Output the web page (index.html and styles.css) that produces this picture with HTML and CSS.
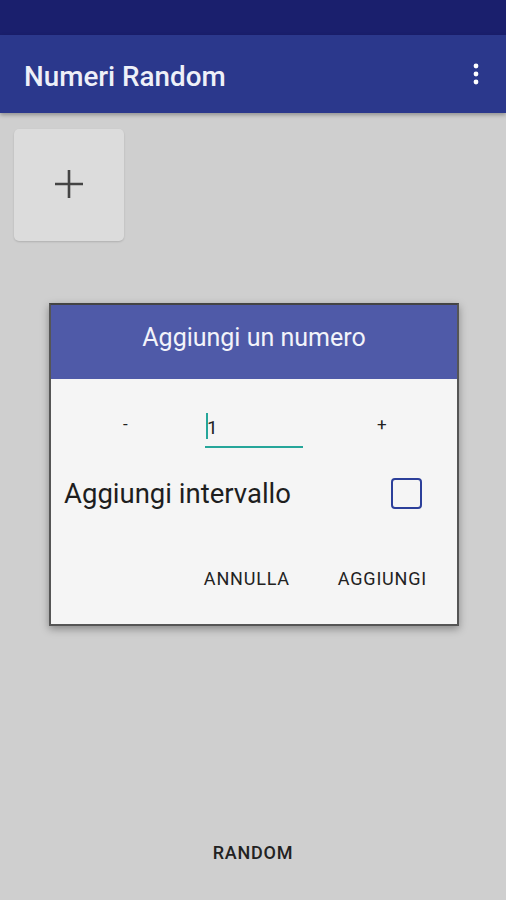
FILE: index.html
```html
<!DOCTYPE html>
<html>
<head>
<meta charset="utf-8">
<link rel="stylesheet" href="styles.css">
</head>
<body>
<div class="screen">
  <div class="statusbar"></div>
  <header class="appbar">
    <span class="title">Numeri Random</span>
    <svg class="kebab" width="8" height="24" viewBox="0 0 8 24"><circle cx="4" cy="4" r="2.4" fill="#fff"/><circle cx="4" cy="12" r="2.4" fill="#fff"/><circle cx="4" cy="20" r="2.4" fill="#fff"/></svg>
  </header>
  <main class="content">
    <div class="addcard">
      <svg width="32" height="32" viewBox="0 0 32 32"><path d="M16 2v28M2 16h28" stroke="#444" stroke-width="2.6"/></svg>
    </div>
    <div class="spacer"></div>
    <div class="random">RANDOM</div>
  </main>
  <div class="dialog">
    <div class="dlg-head">Aggiungi un numero</div>
    <div class="dlg-body">
      <div class="stepper">
        <span class="step minus">-</span>
        <div class="field"><span class="caret"></span>1</div>
        <span class="step plus">+</span>
      </div>
      <div class="range">
        <span class="range-label">Aggiungi intervallo</span>
        <span class="checkbox"></span>
      </div>
      <div class="actions">
        <span class="btn">ANNULLA</span>
        <span class="btn">AGGIUNGI</span>
      </div>
    </div>
  </div>
</div>
</body>
</html>
```
FILE: styles.css
```css
* { box-sizing: border-box; }
html, body { margin: 0; padding: 0; }
body { font-family: Roboto, "Noto Sans", sans-serif; background: #cfcfcf; }
.screen { width: 506px; height: 900px; position: relative; display: flex; flex-direction: column; overflow: hidden; }
.statusbar { height: 35px; background: #1a1f6d; }
.appbar { height: 78px; background: #2b388c; display: flex; align-items: center; justify-content: space-between; padding: 0 26px 0 24px; box-shadow: 0 2px 4px rgba(0,0,0,0.3); position: relative; z-index: 1; }
.title { color: #eef0f8; font-size: 27.8px; font-weight: 500; margin-top: 4px; }
.content { flex: 1; display: flex; flex-direction: column; padding: 16px 14px 0; }
.addcard { width: 110px; height: 112px; background: #dcdcdc; border-radius: 5px; box-shadow: 0 1px 2px rgba(0,0,0,0.15); display: flex; align-items: center; justify-content: center; }
.addcard svg { margin-top: -2px; }
.spacer { flex: 1; }
.random { text-align: center; font-size: 18px; font-weight: 500; color: #222; height: 64px; padding-top: 6px; letter-spacing: 0.8px; margin-left: -14px; margin-right: -14px; }
.dialog { position: absolute; left: 49px; top: 303px; width: 410px; height: 323px; background: #f5f5f5; border: 2px solid #555; border-top-color: #444; box-shadow: 0 3px 8px rgba(0,0,0,0.35); display: flex; flex-direction: column; }
.dlg-head { height: 74px; background: #4f5aa8; color: #f2f3fa; font-size: 25px; display: flex; align-items: center; justify-content: center; padding-bottom: 10px; }
.dlg-body { flex: 1; display: flex; flex-direction: column; }
.stepper { display: flex; align-items: center; height: 69px; padding-top: 20px; }
.step { font-size: 17px; color: #222; }
.minus { margin-left: 72px; width: 82px; }
.field { width: 98px; height: 38px; border-bottom: 2px solid #26a69a; font-size: 19px; color: #222; display: flex; align-items: center; padding-left: 1px; margin-top: 10px; }
.caret { width: 2px; height: 26px; background: #26a69a; margin-right: -1px; margin-top: -4px; }
.plus { margin-left: 74px; }
.range { display: flex; align-items: center; justify-content: space-between; padding: 0 35px 0 13px; margin-top: 29px; }
.range-label { font-size: 27.5px; color: #1e1e1e; }
.checkbox { width: 31px; height: 31px; border: 2px solid #2c3f9a; border-radius: 4px; }
.actions { display: flex; justify-content: flex-end; gap: 48px; padding-right: 30px; margin-top: 58px; }
.btn { font-size: 18px; font-weight: 400; color: #222; letter-spacing: 0.8px; }
```
